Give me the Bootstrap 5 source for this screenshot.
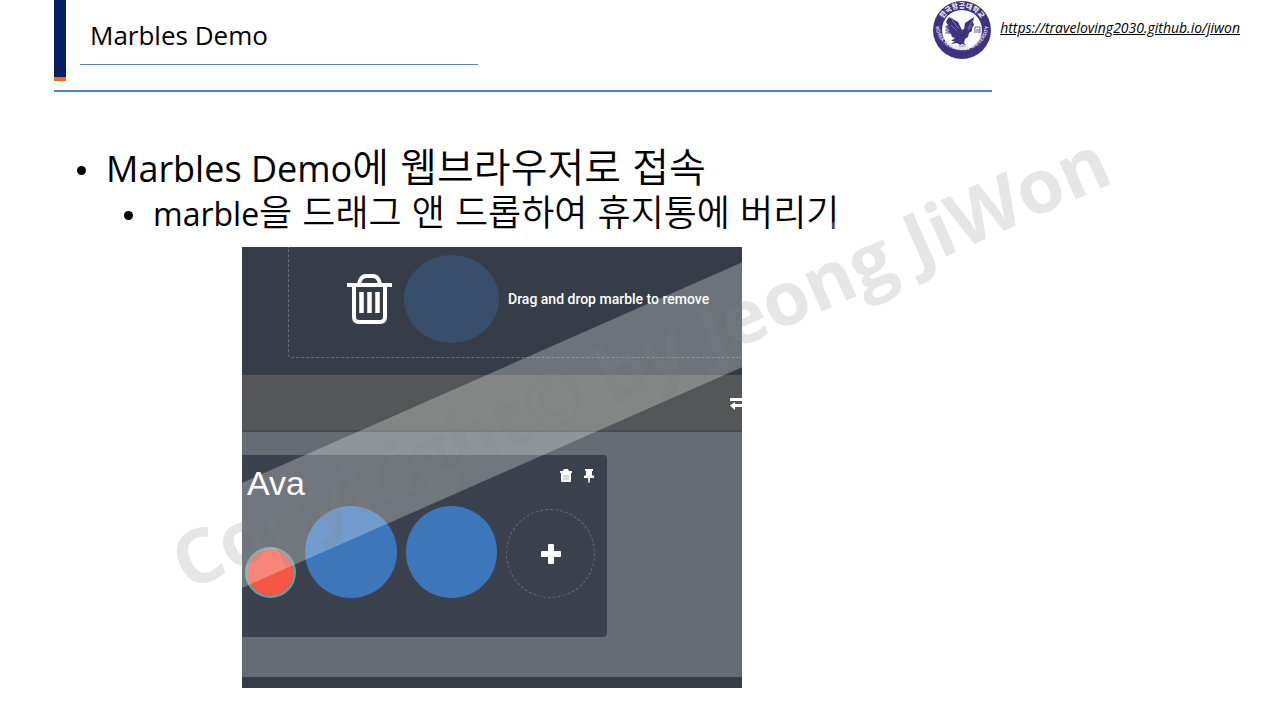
<!DOCTYPE html>
<html lang="ko">
<head>
<meta charset="utf-8">
<meta name="viewport" content="width=device-width, initial-scale=1">
<title>Marbles Demo</title>
<link href="https://cdn.jsdelivr.net/npm/bootstrap@5.3.0/dist/css/bootstrap.min.css" rel="stylesheet">
<style>
  body { font-family: "Open Sans", "Noto Sans CJK KR", sans-serif; color: #000; background: #fff; }
  .slide { padding: 0 40px 32px 54px; }
  .accent { width: 12px; height: 81px; background: #001f5f; border-bottom: 4px solid #f26a0f; }
  .headline { font-size: 26px; line-height: 32px; padding: 19px 0 13px 10px; margin: 0 0 0 14px; border-bottom: 1px solid #5484b8; width: 398px; }
  .rule { height: 2px; background: #4f81bd; margin-top: 9px; }
  .seal { width: 60px; height: 60px; }
  .site { font-size: 14px; line-height: 20px; font-style: italic; color: #000; margin: 18px 0 0 8px; }
  .site:hover { color: #000; }
  .points { margin-top: 53px; padding-left: 52px; font-size: 36px; line-height: 48px; list-style: none; }
  .points ul { padding-left: 47px; font-size: 32px; line-height: 36px; list-style: none; }
  .points li::before { content: ""; display: inline-block; width: 9px; height: 9px; border-radius: 50%; background: #000; margin: 0 20px 3px -29px; vertical-align: middle; }
  .hangul { font-family: "Noto Sans CJK KR DemiLight", "Noto Sans CJK KR", sans-serif; font-weight: 350; font-size: 40px; line-height: 36px; }
  .points ul .hangul { font-size: 36px; line-height: 34px; }
  .shot { width: 500px; margin: 15px 0 0 188px; background: #363d48; font-family: "Liberation Sans", sans-serif; color: #fff; }
  .dropzone { height: 111px; margin: 0 -60px 17px 46px; border: 1px dashed #69707b; border-top: 0; border-radius: 0 0 4px 4px; padding: 8px 0 0 58px; }
  .ghost { width: 95px; height: 88px; background: #384f6b; margin: 0 9px 0 12px; }
  .hint { font-family: Roboto, "Liberation Sans", sans-serif; font-size: 14px; line-height: 20px; font-weight: 500; }
  .toolbar { height: 57px; background: #555657; border-bottom: 2px solid #454b55; }
  .board { background: #656c74; padding: 23px 0 40px; margin-bottom: 11px; }
  .owner { width: 365px; height: 182px; background: #3b424d; border-radius: 0 4px 4px 0; padding: 8px 12px 0 3px; }
  .owner h2 { font-size: 34px; line-height: 40px; padding-left: 2px; }
  .glyph { background: none; border: 0; padding: 0; line-height: 0; color: #fff; }
  .actions { gap: 10px; padding-top: 5px; }
  .marbles { gap: 9px; margin-top: 3px; }
  .marble { width: 92px; height: 92px; background: #3e76bb; border: 0; padding: 0; }
  .marble-sm { width: 51px; height: 51px; background: #f45845; border: 2px solid #4aa8b0; }
  .marble-add { width: 89px; height: 89px; background: none; border: 1px dashed #69707b; color: #fff; }
  .watermark { inset: 0; pointer-events: none; }
  .watermark span { font-size: 75px; line-height: 96px; font-weight: 700; background: rgba(255,255,255,.28); color: rgba(127,129,124,.2); transform: rotate(-23.8deg); }
</style>
</head>
<body>
<main class="slide position-relative overflow-hidden min-vh-100">
  <header class="d-flex align-items-start">
    <div class="flex-grow-1">
      <div class="d-flex align-items-start">
        <div class="accent"></div>
        <h1 class="headline fw-normal">Marbles Demo</h1>
        <svg class="seal ms-auto" viewBox="0 0 60 60" role="img" aria-label="한국항공대학교">
          <defs>
            <path id="arcTop" d="M8 30a22 22 0 0 1 44 0"/>
            <path id="arcLow" d="M3.500 27a26.700 26.700 0 0 0 53 0"/>
          </defs>
          <circle cx="30" cy="30" r="29" fill="#3f327f"/>
          <circle cx="30" cy="30" r="20" fill="#fff"/>
          <text font-size="7" font-weight="700" fill="#fff" text-anchor="middle"><textPath href="#arcTop" startOffset="50%">한국항공대학교</textPath></text>
          <text font-size="5" font-weight="700" fill="#d9d5ee" text-anchor="middle"><textPath href="#arcLow" startOffset="50%">KOREA AEROSPACE UNIVERSITY</textPath></text>
          <path fill="#3f327f" d="M17 17l9 5 4 8 2-1 1-6 9-6-1 5 1 3-2 3 0 3-3 2-1 4-3 2-1 4 2 2-4-1-2 1-3-2-6 1 4-3-4 0 4-3-3-1-1-3-3-2 1-2-3-3 2-2-2-3 1-2z"/>
          <path fill="none" stroke="#aaa3cc" stroke-width=".6" d="M20 20l7 9M19 25l6 6M41 20l-5 8M40 25l-4 5"/>
          <path fill="none" stroke="#6d629f" stroke-width="1" d="M13 27h5M13 30h5M15 25v8M13 33h5M43 33v-6h5v6M45 29v4M47 29v4"/>
          <path stroke="#8b83b5" d="M27 46h7"/>
        </svg>
      </div>
      <div class="rule"></div>
    </div>
    <a class="site text-decoration-underline" href="https://traveloving2030.github.io/jiwon">https://traveloving2030.github.io/jiwon</a>
  </header>

  <ul class="points mb-0">
    <li>Marbles Demo<span class="hangul">에 웹브라우저로 접속</span>
      <ul><li>marble<span class="hangul">을 드래그 앤 드롭하여 휴지통에 버리기</span></li></ul>
    </li>
  </ul>

  <section class="shot overflow-hidden">
    <div class="dropzone d-flex align-items-start">
      <div class="d-flex align-items-center">
        <svg width="45" height="50" viewBox="0 0 45 50" fill="none" stroke="#fff" stroke-width="4" stroke-linejoin="round" aria-hidden="true">
          <path d="M0 11h45M12 10c1-5 3-8 7-8h7c4 0 6 3 7 8M7 12v31q0 5 5 5h21q5 0 5-5V12"/>
          <path stroke-width="4.500" d="M14.500 18v21M22.500 18v21M30.500 18v21"/>
        </svg>
        <div class="ghost rounded-circle"></div>
        <span class="hint text-nowrap">Drag and drop marble to remove</span>
      </div>
    </div>
    <div class="toolbar d-flex align-items-center justify-content-end">
      <button class="glyph" type="button" aria-label="Swap">
        <svg width="12" height="14" viewBox="0 0 12 14" fill="#fff"><path d="M0 2h12v3H0zM5 8h7v3H5v3L0 9.500 5 6z"/></svg>
      </button>
    </div>
    <div class="board">
      <div class="owner">
        <div class="d-flex align-items-start">
          <h2 class="fw-normal mb-0 me-auto">Ava</h2>
          <div class="actions d-flex">
            <button class="glyph" type="button" aria-label="Delete">
              <svg width="14" height="16" viewBox="0 0 14 16"><path fill="#fff" d="M1 3h3l1-2h4l1 2h3v2H1zM2 5h10v8q0 1-1 1H3q-1 0-1-1z"/><path stroke="#aeb2b7" d="M5 7v5M7 7v5M9 7v5"/></svg>
            </button>
            <button class="glyph" type="button" aria-label="Pin">
              <svg width="12" height="16" viewBox="0 0 12 16" fill="#fff"><path d="M2 1h8v2H9v4l2 1v2H7l-.500 5h-1L5 10H1V8l2-1V3H2z"/></svg>
            </button>
          </div>
        </div>
        <div class="marbles d-flex align-items-end">
          <button class="marble-sm rounded-circle p-0" type="button" aria-label="Red marble"></button>
          <button class="marble rounded-circle" type="button" aria-label="Blue marble"></button>
          <button class="marble rounded-circle" type="button" aria-label="Blue marble"></button>
          <button class="marble-add d-flex align-items-center justify-content-center rounded-circle p-0" type="button" aria-label="Add marble">
            <svg width="20" height="20" viewBox="0 0 20 20" fill="#fff"><path d="M8 0h4q1 0 1 1v6h6q1 0 1 1v4q0 1-1 1h-6v6q0 1-1 1H8q-1 0-1-1v-6H1q-1 0-1-1V8q0-1 1-1h6V1q0-1 1-1z"/></svg>
          </button>
        </div>
      </div>
    </div>
  </section>

  <div class="watermark position-absolute d-flex align-items-center justify-content-center">
    <span class="text-nowrap">CopyRight© by Jeong JiWon</span>
  </div>
</main>
<script src="https://cdn.jsdelivr.net/npm/bootstrap@5.3.0/dist/js/bootstrap.bundle.min.js"></script>
</body>
</html>
